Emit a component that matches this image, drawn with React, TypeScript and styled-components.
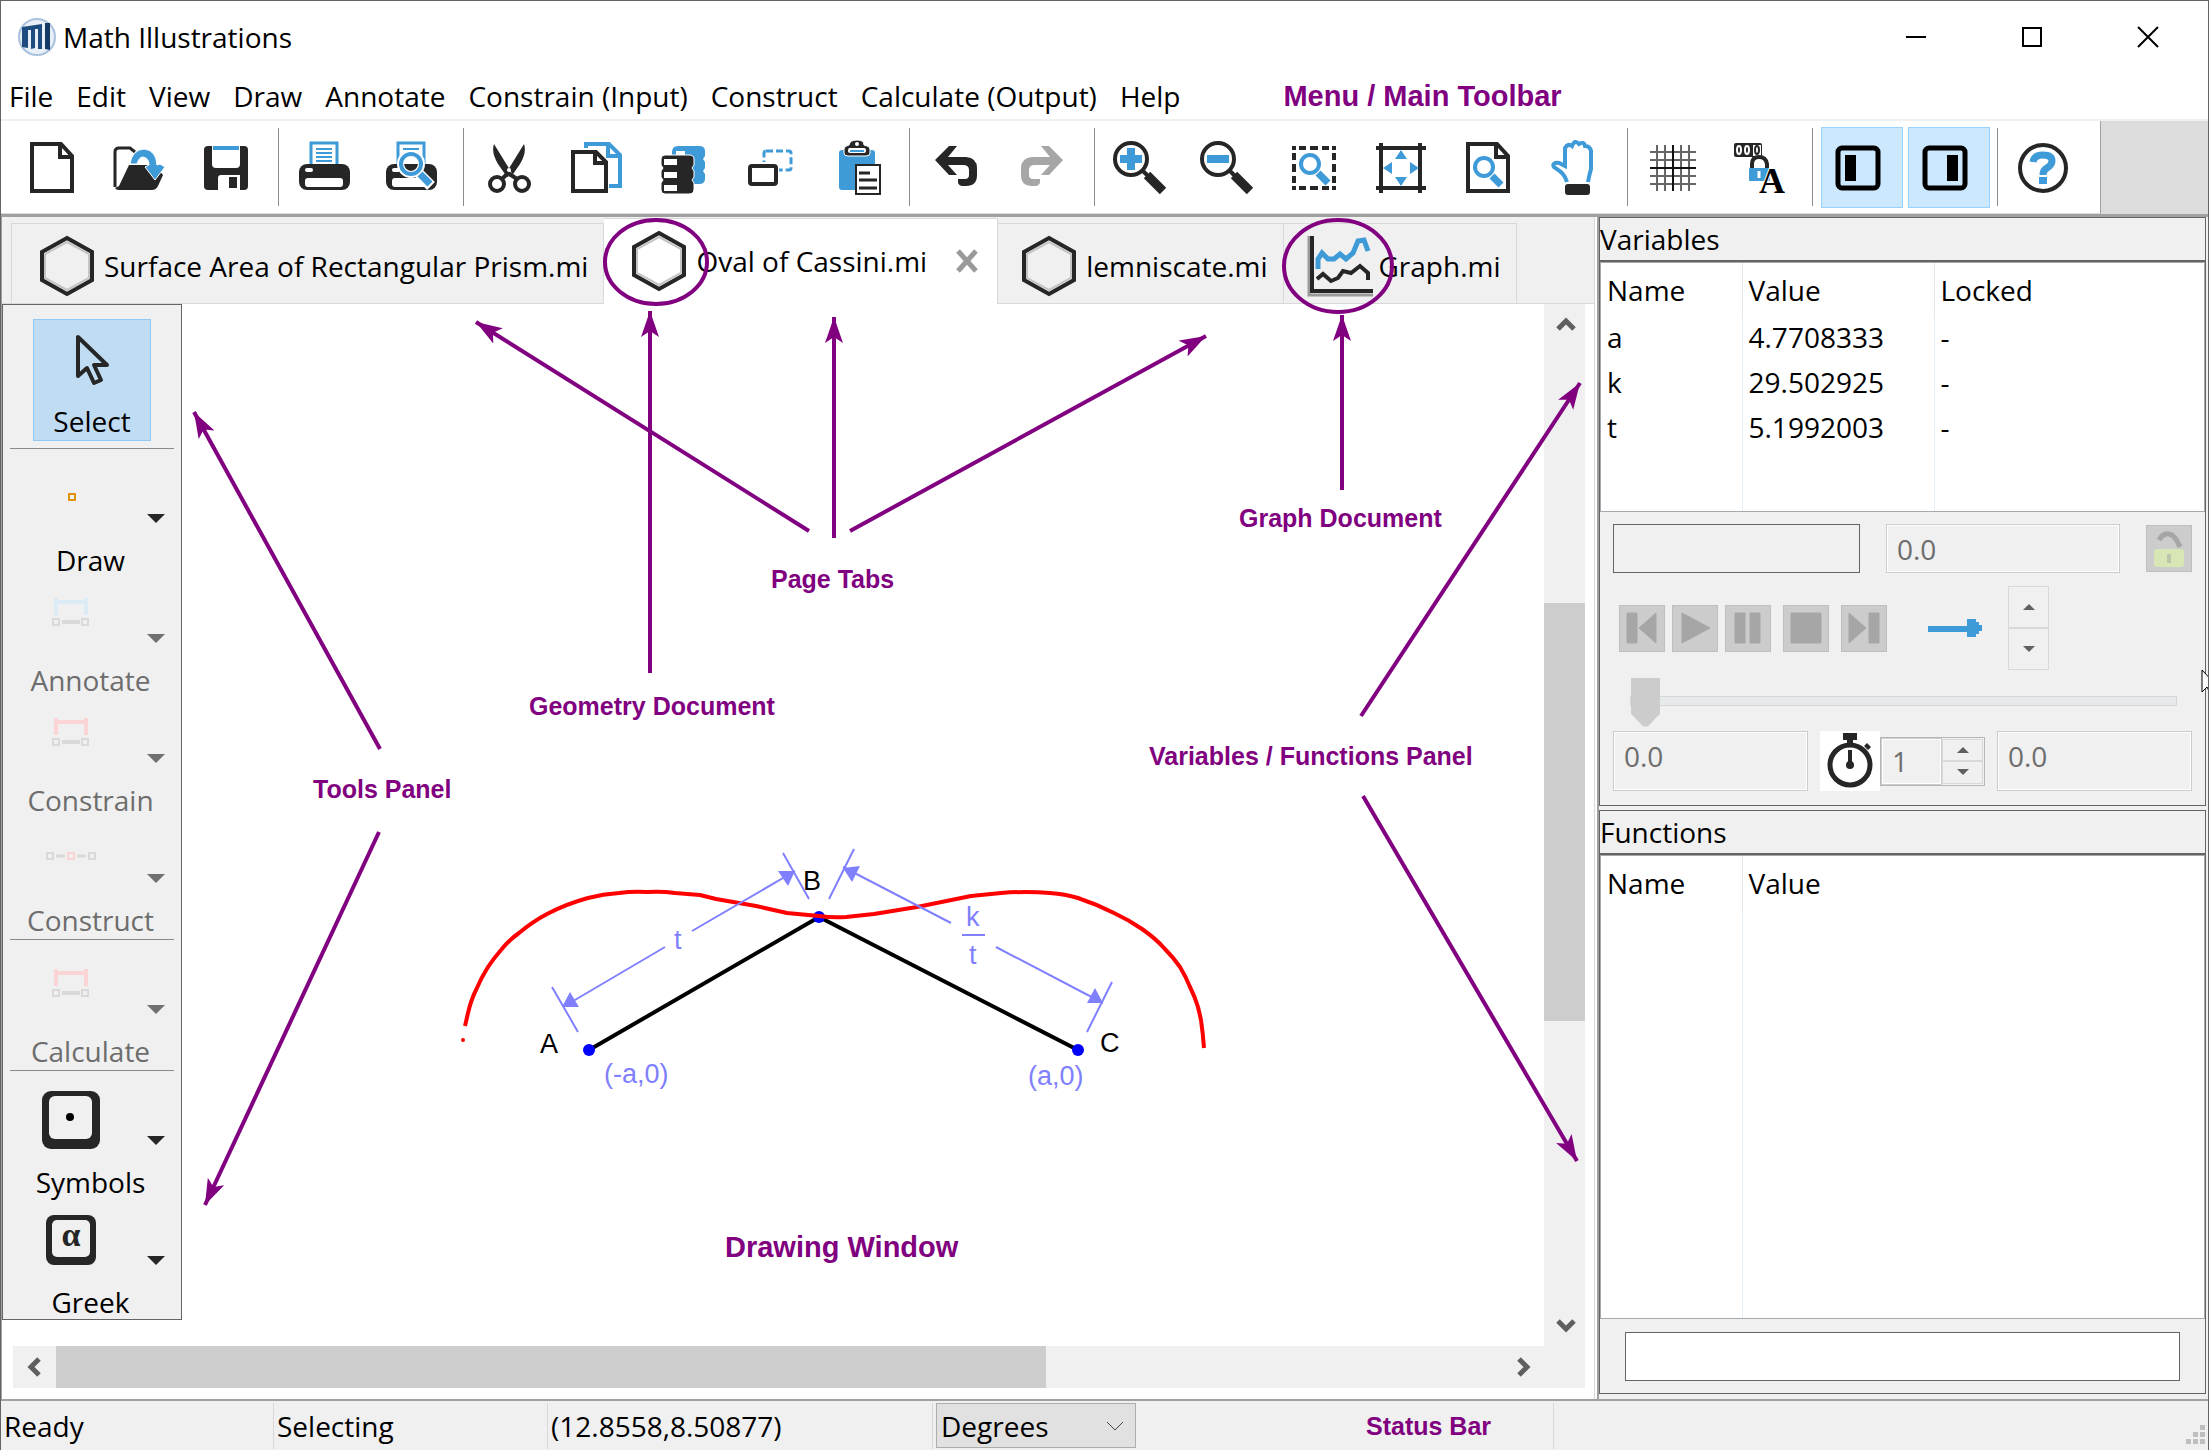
import React from "react";
import styled, { createGlobalStyle, css } from "styled-components";

const INK = "#262626";
const BLUE = "#3f9bd8";
const PURPLE = "#800080";
const FACE = "#f0f0f0";
const EDGE = "#646464";
const RULE = "#d9d9d9";

const GlobalStyle = createGlobalStyle`
  *, *::before, *::after { box-sizing: border-box; }
  body { margin: 0; background: ${FACE}; }
  body, button, input, select {
    font-family: "Open Sans", "Noto Sans", sans-serif;
    font-size: 28px;
    line-height: 38px;
    color: #000;
  }
  button { padding: 0; border: 0; background: none; }
  svg { display: block; flex: none; overflow: visible; }
`;

const Window = styled.div`
  position: relative;
  display: flex;
  flex-direction: column;
  min-height: 100vh;
  border: 1px solid ${EDGE};
  background: #fff;
  overflow: hidden;
`;

/* ---------- title bar and menu ---------- */

const TitleBar = styled.header`
  display: flex;
  align-items: center;
  height: 72px;
  padding: 0 2px 0 16px;
`;
const Title = styled.h1`
  flex: 1;
  margin: 0 0 0 6px;
  font-size: inherit;
  font-weight: 400;
`;
const CaptionButton = styled.button`
  display: flex;
  align-items: center;
  justify-content: center;
  width: 116px;
  height: 70px;
`;
const MenuBar = styled.nav`
  display: flex;
  align-items: center;
  height: 48px;
  padding: 0 8px;
  gap: 23px;
  border-bottom: 2px solid ${FACE};
`;
const Callout = styled.span<{ $large?: boolean; $before: number }>`
  margin-left: ${(p) => p.$before}px;
  font: 700 ${(p) => (p.$large ? 29 : 25)}px/32px "Liberation Sans", Arial, sans-serif;
  color: ${PURPLE};
  white-space: nowrap;
`;

/* ---------- toolbar ---------- */

const ToolStrip = styled.div`
  display: flex;
  height: 96px;
  background: #dcdcdc;
  border-bottom: 3px solid #a0a0a0;
`;
const ToolBar = styled.div`
  display: flex;
  align-items: center;
  gap: 5px;
  padding: 0 12px 0 14px;
  background: #fff;
  border-right: 1px solid #a0a0a0;
  border-bottom: 1px solid ${RULE};
`;
const ToolButton = styled.button<{ $on?: boolean }>`
  display: flex;
  align-items: center;
  justify-content: center;
  width: 82px;
  height: 81px;
  padding: 2px 8px 0 0;
  border: 1px solid ${(p) => (p.$on ? "#99d1ff" : "transparent")};
  background: ${(p) => (p.$on ? "#cce8ff" : "transparent")};
`;
const ToolGap = styled.span`
  width: 1px;
  height: 78px;
  margin: 0 3px 0 2px;
  background: #8d8d8d;
`;

/* ---------- document area ---------- */

const Body = styled.main`
  display: flex;
  flex: 1;
  min-height: 0;
`;
const DocPane = styled.section`
  position: relative;
  display: flex;
  flex: 1;
  flex-direction: column;
  min-width: 0;
  border-left: 1px solid #a0a0a0;
  border-right: 1px solid ${RULE};
`;
const TabRow = styled.div`
  display: flex;
  align-items: flex-end;
  height: 87px;
  padding-left: 9px;
  background: ${FACE};
  border-bottom: 1px solid ${RULE};
`;
const Tab = styled.button<{ $active?: boolean; $left?: number; $gap?: number }>`
  display: flex;
  align-items: center;
  gap: ${(p) => p.$gap ?? 10}px;
  height: 80px;
  padding: 4px 15px 0 ${(p) => p.$left ?? 28}px;
  border: 1px solid ${RULE};
  border-width: 1px 1px 0 0;
  white-space: nowrap;
  &:first-child { border-left-width: 1px; }
  ${(p) =>
    p.$active &&
    css`
      height: 86px;
      margin-bottom: -1px;
      padding: 0 18px 2px 28px;
      background: #fff;
    `}
`;
const TabClose = styled.span`
  display: flex;
  margin-left: 18px;
`;
const Workspace = styled.div`
  display: flex;
  flex: 1;
  margin-right: 9px;
`;
const Canvas = styled.div`
  flex: 1;
  min-width: 0;
  overflow: hidden;
`;
const Annotations = styled.svg`
  position: absolute;
  left: 0;
  top: 0;
  pointer-events: none;
`;

const Palette = styled.aside`
  align-self: flex-start;
  width: 180px;
  height: 1016px;
  padding-top: 14px;
  border: 1px solid ${EDGE};
  background: ${FACE};
  overflow: hidden;
`;
const SelectTool = styled.button`
  display: flex;
  flex-direction: column;
  align-items: center;
  justify-content: space-between;
  width: 118px;
  height: 122px;
  margin: 0 0 7px 30px;
  padding-top: 12px;
  border: 1px solid #90c8f6;
  background: #c0dcf3;
`;
const PaletteRule = styled.hr`
  height: 1px;
  margin: 0 7px 10px;
  border: 0;
  background: #8a8a8a;
`;
const PaletteItem = styled.button`
  display: flex;
  flex-direction: column;
  justify-content: space-between;
  width: 100%;
  height: 120px;
  color: #000;
  &:disabled { color: #6d6d6d; }
`;
const PaletteIcons = styled.span`
  display: flex;
  gap: 45px;
  padding: 9px 0 0 39px;
`;
const PaletteLabel = styled.span`
  align-self: stretch;
  padding-right: 3px;
  text-align: center;
`;

/* ---------- scroll bars ---------- */

const VBar = styled.div`
  display: flex;
  flex-direction: column;
  width: 41px;
  background: ${FACE};
`;
const HBar = styled.div`
  display: flex;
  height: 42px;
  margin: 0 9px 11px 11px;
  padding-right: 41px;
  background: ${FACE};
`;
const Arrow = styled.button`
  display: flex;
  align-items: center;
  justify-content: center;
  width: 43px;
  height: 42px;
`;
const VTrack = styled.div`
  display: grid;
  grid-template-rows: 257fr 418fr 283fr;
  flex: 1;
`;
const HTrack = styled.div`
  display: grid;
  grid-template-columns: 989fr 455fr;
  flex: 1;
`;
const Thumb = styled.span<{ $row?: number }>`
  grid-row: ${(p) => p.$row ?? 1};
  background: #cdcdcd;
`;

/* ---------- side panels ---------- */

const Side = styled.aside`
  display: flex;
  flex-direction: column;
  width: 611px;
  padding: 0 2px 5px 0;
  gap: 4px;
  margin-left: 2px;
  border-left: 2px solid #a0a0a0;
  background: ${FACE};
`;
const Panel = styled.section<{ $grow?: boolean }>`
  display: flex;
  flex-direction: column;
  flex: ${(p) => (p.$grow ? "1" : "none")};
  border: 1px solid ${EDGE};
`;
const PanelTitle = styled.h2`
  height: 44px;
  margin: 0;
  padding-top: 2px;
  border-bottom: 2px solid ${EDGE};
  font-size: inherit;
  font-weight: 400;
`;
const ListBox = styled.div<{ $rows?: boolean }>`
  display: flex;
  flex: ${(p) => (p.$rows ? "none" : "1")};
  height: ${(p) => (p.$rows ? "250px" : "auto")};
  min-height: 200px;
  border: 1px solid #a5a8ad;
  background: #fff;
`;
const Grid = styled.table`
  width: 100%;
  border-collapse: collapse;
  table-layout: fixed;
  th, td {
    height: 45px;
    padding: 0 0 0 6px;
    border-left: 1px solid #e8f0f7;
    text-align: left;
    vertical-align: top;
    font-weight: 400;
  }
  th { height: 55px; padding-top: 8px; border-color: #e5e5e5; }
  th:first-child, td:first-child { border-left: 0; }
  tr:last-child td { height: auto; }
`;
const Col = styled.col<{ $w?: number }>`
  width: ${(p) => (p.$w ? `${p.$w}px` : "auto")};
`;
const Controls = styled.div`
  display: flex;
  flex-direction: column;
  padding: 12px 13px 14px;
`;
const Row = styled.div<{ $h: number }>`
  display: flex;
  align-items: center;
  justify-content: space-between;
  height: ${(p) => p.$h}px;
`;
const Field = styled.input<{ $w?: number; $h?: number; $dark?: boolean; $lift?: boolean }>`
  width: ${(p) => (p.$w ? `${p.$w}px` : "100%")};
  height: ${(p) => p.$h ?? 49}px;
  padding: 0 10px ${(p) => (p.$lift ? 10 : 0)}px;
  border: 1px solid ${(p) => (p.$dark ? EDGE : "#cccccc")};
  border-radius: 0;
  outline: 0;
  background: ${(p) => (p.disabled ? FACE : "#fff")};
  box-shadow: ${(p) => (p.$dark ? "none" : "inset 0 0 0 1px #fff")};
  color: #6d6d6d;
`;
const SquareButton = styled.button`
  display: flex;
  align-items: center;
  justify-content: center;
  width: 46px;
  height: 47px;
  border: 1px solid #bfbfbf;
  background: #cccccc;
`;
const Transport = styled.div`
  display: flex;
  align-items: center;
  height: 84px;
  margin-top: 13px;
  padding-left: 6px;
`;
const Group = styled.div<{ $gap: number; $after: number }>`
  display: flex;
  align-items: center;
  gap: ${(p) => p.$gap}px;
  margin-right: ${(p) => p.$after}px;
`;
const Spin = styled.div<{ $w: number; $h: number }>`
  display: flex;
  flex-direction: column;
  flex: none;
  width: ${(p) => p.$w}px;
  height: ${(p) => p.$h}px;
`;
const SpinButton = styled.button`
  display: flex;
  flex: 1;
  align-items: center;
  justify-content: center;
  border: 1px solid ${RULE};
`;
const NumberBox = styled.div`
  display: flex;
  align-items: center;
  width: 105px;
  height: 49px;
  padding-right: 1px;
  border: 1px solid #b4b7bb;
`;
const Timer = styled.span`
  display: flex;
  align-items: center;
  justify-content: center;
  width: 60px;
  height: 60px;
  background: #fff;
`;
const Slider = styled.input`
  appearance: none;
  width: 547px;
  height: 49px;
  margin: 6px 17px;
  background: none;
  &::-webkit-slider-runnable-track {
    height: 10px;
    border: 1px solid #d3d7d7;
    background: #e6eaea;
  }
  &::-webkit-slider-thumb {
    appearance: none;
    width: 29px;
    height: 49px;
    margin-top: -19px;
    background: #cccccc;
    clip-path: polygon(0 0, 100% 0, 100% 74%, 58% 100%, 42% 100%, 0 74%);
  }
`;
const Entry = styled.div`
  padding: 13px 25px 12px;
`;

/* ---------- status bar ---------- */

const StatusBar = styled.footer`
  display: flex;
  align-items: center;
  height: 51px;
  border-top: 2px solid #a0a0a0;
  background: ${FACE};
`;
const StatusCell = styled.div<{ $w?: number }>`
  display: flex;
  align-items: center;
  flex: ${(p) => (p.$w ? "none" : "1")};
  width: ${(p) => (p.$w ? `${p.$w}px` : "auto")};
  height: 46px;
  padding-left: 3px;
  border-right: ${(p) => (p.$w ? 1 : 0)}px solid ${RULE};
`;
const SelectWrap = styled.label`
  display: grid;
  align-items: center;
  width: 200px;
  height: 45px;
  border: 1px solid #adadad;
  background: #e1e1e1;
  svg { grid-area: 1 / 1; justify-self: end; margin-right: 10px; pointer-events: none; }
`;
const UnitSelect = styled.select`
  grid-area: 1 / 1;
  width: 100%;
  height: 43px;
  padding: 0 0 0 4px;
  border: 0;
  appearance: none;
  background: transparent;
`;
const Pointer = styled.svg`
  position: absolute;
  right: -10px;
  top: 668px;
`;

/* ---------- icons ---------- */

const Icon = ({ children, w = 56, h = 56 }: { children: React.ReactNode; w?: number; h?: number }) => (
  <svg width={w} height={h} viewBox={`0 0 ${w} ${h}`} fill="none" aria-hidden="true">
    {children}
  </svg>
);

const Printer = () => (
  <>
    <path d="M15 25V3h26v22" stroke={BLUE} strokeWidth="3" fill="#fff" />
    <path d="M20 9h16M20 13h16M20 17h16M20 21h16" stroke={BLUE} strokeWidth="2" />
    <rect x="3" y="24" width="51" height="26" rx="8" fill={INK} />
    <rect x="9" y="28" width="8" height="4" rx="2" fill="#fff" />
    <rect x="9" y="38" width="38" height="9" rx="3" fill="#fff" />
  </>
);

const Lens = ({ x, y, r, to }: { x: number; y: number; r: number; to: number }) => (
  <>
    <circle cx={x} cy={y} r={r} stroke={BLUE} strokeWidth="4" fill="#fff" />
    <path d={`M${x + r - 1} ${y + r}L${x + to} ${y + to + 1}`} stroke={BLUE} strokeWidth="7" />
  </>
);

const Magnifier = () => (
  <>
    <circle cx="19" cy="19" r="16" stroke={INK} strokeWidth="4" />
    <path d="M31 31L36 36" stroke={INK} strokeWidth="4" />
    <path d="M35 35L51 51" stroke={INK} strokeWidth="9" />
  </>
);

const DASH = "4 3 7 4 8 4 7 3 4 9";

const icons: Record<string, React.ReactNode> = {
  new: <path d="M8 4H37L48 16V51H8ZM36 4V17H48" stroke={INK} strokeWidth="4" />,
  open: (
    <>
      <path d="M4 47V12q0-4 4-4h11l5 4" stroke={INK} strokeWidth="3" />
      <path d="M4 48L8 46L18 25H44L52 35L47 46q-2 4-6 4H8q-4 0-4-3Z" fill={INK} />
      <path d="M19 24Q21 10 33 9Q45 10 46 25L49 24L54 27L44 40L34 27L38 25Q38 18 32 17Q28 17 26 24Z" fill={BLUE} stroke="#fff" strokeWidth="1" />
    </>
  ),
  save: (
    <>
      <path d="M10 6H46q4 0 4 4V46q0 4-4 4H10q-4 0-4-4V10q0-4 4-4Z" fill={INK} />
      <path d="M14 6H42V24q0 4-4 4H18q-4 0-4-4Z" fill="#fff" />
      <path d="M15 6H41V10H15Z" fill={BLUE} />
      <path d="M23 35H42V50H20V38q0-3 3-3Z" fill="#fff" />
      <path d="M31 37H39V48H31Z" fill={INK} />
    </>
  ),
  print: <Printer />,
  preview: (
    <>
      <Printer />
      <circle cx="28" cy="24" r="14" fill="#fff" />
      <path d="M36 34L48 46" stroke="#fff" strokeWidth="11" />
      <Lens x={28} y={24} r={10} to={19} />
      <path d="M21 24H35Q34 30 28 31Q22 30 21 24Z" fill={INK} />
    </>
  ),
  cut: (
    <>
      <path d="M13 4L32 35L26 37L17 24Q10 12 13 4ZM43 4L24 35L30 37L39 24Q46 12 43 4Z" fill={INK} />
      <circle cx="16" cy="44" r="7" stroke={INK} strokeWidth="4" />
      <circle cx="41" cy="44" r="7" stroke={INK} strokeWidth="4" />
      <path d="M21 39L27 33L36 39" stroke={INK} strokeWidth="4" />
      <circle cx="28" cy="30" r="2" fill="#fff" />
    </>
  ),
  copy: (
    <>
      <path d="M18 8V4H41L52 15V46H41M40 4V16H52" stroke={BLUE} strokeWidth="4" />
      <path d="M5 12H28L38 22V51H5Z" fill="#fff" stroke={INK} strokeWidth="4" />
      <path d="M27 12V23H38" stroke={INK} strokeWidth="4" />
    </>
  ),
  stack: (
    <>
      <path d="M17 12q0-6 6-6H44q6 0 6 5v5l-2 3l2 3v6l-2 3l2 3v5q0 5-6 5H30V11H21v4H17Z" fill={BLUE} />
      <path d="M10 15H34q5 0 5 4v6l-2 3l2 3v6l-2 3l2 3v6q0 5-5 5H10q-4 0-4-4v-7l2-3l-2-3v-6l2-3l-2-3v-6q0-4 4-4Z" fill={INK} stroke="#fff" strokeWidth="1" />
      <path d="M9 19h13v6H9ZM9 32h13v6H9ZM9 45h13v6H9Z" fill="#fff" />
    </>
  ),
  duplicate: (
    <>
      <rect x="22" y="11" width="27" height="19" rx="2" stroke={BLUE} strokeWidth="3" strokeDasharray="7 3" />
      <path d="M4 22H37V48H4Z" fill="#fff" />
      <rect x="8" y="26" width="26" height="18" rx="2" fill="#fff" stroke={INK} strokeWidth="4" />
    </>
  ),
  paste: (
    <>
      <rect x="10" y="10" width="36" height="40" rx="3" fill={BLUE} />
      <path d="M15 13V9q0-3 5-4q1-5 8-5t7 5q6 1 6 4v4q0 3-4 3H19q-4 0-4-3Z" fill={INK} stroke="#fff" strokeWidth="1" />
      <rect x="19" y="8" width="18" height="5" rx="2" fill="#fff" />
      <path d="M21 11H35" stroke={BLUE} strokeWidth="2" />
      <circle cx="28" cy="4" r="2" fill="#fff" />
      <rect x="27" y="25" width="24" height="29" fill="#fff" stroke={INK} strokeWidth="2" />
      <path d="M30 33H41M30 40H48M30 48H48" stroke={INK} strokeWidth="3" />
    </>
  ),
  undo: <path d="M8 20L22 6H30L21 17H39Q50 18 50 28V35Q50 46 39 46H35Q31 45 31 42V39H38Q42 39 42 35V30Q42 25 36 25H21L30 35H22Z" fill={INK} />,
  redo: <path d="M49 20L35 6H27L36 17H18Q7 18 7 28V35Q7 46 18 46H22Q26 45 26 42V39H19Q15 39 15 35V30Q15 25 21 25H36L27 35H35Z" fill="#a6a6a6" />,
  zoomIn: (
    <>
      <Magnifier />
      <path d="M19 8V30M8 19H30" stroke={BLUE} strokeWidth="8" />
    </>
  ),
  zoomOut: (
    <>
      <Magnifier />
      <path d="M8 19H30" stroke={BLUE} strokeWidth="8" />
    </>
  ),
  zoomArea: (
    <>
      <path d="M6 8H50M6 48H50M8 6V50M48 6V50" stroke={INK} strokeWidth="4" strokeDasharray={DASH} />
      <Lens x={24} y={24} r={9} to={18} />
    </>
  ),
  fit: (
    <>
      <path d="M3 8H53M3 48H53M8 3V53M47 3V53" stroke={INK} strokeWidth="4" />
      <path d="M28 10L34 19H22ZM28 46L34 37H22ZM10 28L19 22V34ZM46 28L37 22V34Z" fill={BLUE} />
    </>
  ),
  zoomPage: (
    <>
      <path d="M8 4H37L48 16V51H8ZM36 4V17H48" stroke={INK} strokeWidth="4" />
      <Lens x={24} y={27} r={9} to={17} />
    </>
  ),
  pan: (
    <>
      <path d="M20 42C18 34 13 31 7 27C5 24 8 22 12 23L18 26V8Q21 3 25 6Q28 -1 32 4Q37 1 38 6Q43 6 44 11V29Q42 36 41 42" stroke={BLUE} strokeWidth="4" />
      <rect x="18" y="44" width="25" height="11" rx="3" fill={INK} />
    </>
  ),
  grid: (
    <>
      <path d="M12 5V51M20 5V51M36 5V51M44 5V51M5 12H51M5 20H51M5 36H51M5 44H51" stroke="#666" strokeWidth="2" />
      <path d="M28 5V51M5 28H51" stroke="#111" strokeWidth="2" />
    </>
  ),
  lock: (
    <>
      <rect x="2" y="3" width="28" height="14" rx="2" fill={INK} />
      <ellipse cx="7" cy="10" rx="2" ry="4" stroke="#fff" strokeWidth="2" />
      <ellipse cx="15" cy="10" rx="2" ry="4" stroke="#fff" strokeWidth="2" />
      <rect x="21" y="5" width="8" height="11" fill="#fff" />
      <ellipse cx="25" cy="10" rx="2" ry="4" stroke={INK} strokeWidth="2" />
      <path d="M20 29V24Q20 17 27 17T35 24V29" stroke={INK} strokeWidth="4" />
      <rect x="17" y="28" width="21" height="13" rx="1" fill={BLUE} />
      <path d="M27 31V38" stroke="#fff" strokeWidth="3" />
      <text x="27" y="53" fontFamily="Liberation Serif, serif" fontWeight="700" fontSize="36" fill="#000" stroke="#fff" strokeWidth="2" paintOrder="stroke">A</text>
    </>
  ),
  leftPanel: (
    <>
      <rect x="8" y="8" width="40" height="40" rx="4" stroke="#000" strokeWidth="5" />
      <path d="M15 15H26V41H15Z" fill="#000" />
    </>
  ),
  rightPanel: (
    <>
      <rect x="8" y="8" width="40" height="40" rx="4" stroke="#000" strokeWidth="5" />
      <path d="M30 15H41V41H30Z" fill="#000" />
    </>
  ),
  help: (
    <>
      <circle cx="28" cy="28" r="23" stroke={INK} strokeWidth="4" />
      <path d="M18 22Q19 15 28 15T37 21Q37 25 32 28Q28 30 28 35" stroke={BLUE} strokeWidth="7" />
      <path d="M24 37H32V44H24Z" fill={BLUE} />
    </>
  ),
};

const toolGroups: [string, string, boolean?][][] = [
  [["new", "New"], ["open", "Open"], ["save", "Save"]],
  [["print", "Print"], ["preview", "Print preview"]],
  [["cut", "Cut"], ["copy", "Copy"], ["stack", "Copy as"], ["duplicate", "Duplicate"], ["paste", "Paste"]],
  [["undo", "Undo"], ["redo", "Redo"]],
  [["zoomIn", "Zoom in"], ["zoomOut", "Zoom out"], ["zoomArea", "Zoom to area"], ["fit", "Fit"], ["zoomPage", "Zoom page"], ["pan", "Pan"]],
  [["grid", "Grid"], ["lock", "Lock values"]],
  [["leftPanel", "Tools panel", true], ["rightPanel", "Variables panel", true]],
  [["help", "Help"]],
];

const Hexagon = () => (
  <Icon w={54} h={62}>
    <path d="M27 3L52 17V45L27 59L2 45V17Z" stroke={INK} strokeWidth="4" />
    <path d="M27 7L49 19V43L27 55L5 43V19Z" stroke="#c4c4c4" strokeWidth="2" />
  </Icon>
);
const GraphIcon = () => (
  <Icon w={66} h={62}>
    <path d="M1 1V60H65" stroke="#9a9a9a" strokeWidth="3" />
    <path d="M4 1V56H65" stroke={INK} strokeWidth="4" />
    <path d="M10 34V24L14 18L20 24L26 24L32 19L38 24L45 18L50 6L56 5L60 16" stroke={BLUE} strokeWidth="5" />
    <path d="M9 44L15 39L23 46L30 43L35 36L43 38L52 31L60 38V45" stroke={INK} strokeWidth="4" />
  </Icon>
);

/* ---------- tools panel content ---------- */

const Measure = ({ tint }: { tint: string }) => (
  <>
    <path d="M14 10V27M44 10V27M14 14H44" stroke={tint} strokeWidth="4" />
    <path d="M20 34H38" stroke="#d9d9d9" strokeWidth="4" />
    <path d="M11 31h6v6h-6ZM40 31h6v6h-6Z" stroke="#d9d9d9" strokeWidth="2" />
  </>
);

type PaletteEntry = { label: string; art: React.ReactNode; off?: boolean; rule?: boolean };
const palette: PaletteEntry[] = [
  { label: "Draw", art: <path d="M27 26h6v6h-6Z" stroke="#e0920f" strokeWidth="2" /> },
  { label: "Annotate", art: <Measure tint="#dcecf7" />, off: true },
  { label: "Constrain", art: <Measure tint="#fbd5d5" />, off: true },
  {
    label: "Construct",
    off: true,
    rule: true,
    art: (
      <>
        <path d="M5 25h6v6h-6ZM47 25h6v6h-6Z" stroke="#d9d9d9" strokeWidth="2" />
        <path d="M14 28h9M35 28h9" stroke="#d9d9d9" strokeWidth="3" />
        <path d="M26 25h6v6h-6Z" stroke="#fbd5d5" strokeWidth="2" />
      </>
    ),
  },
  { label: "Calculate", art: <Measure tint="#fbd5d5" />, off: true, rule: true },
  {
    label: "Symbols",
    art: (
      <>
        <rect x="0" y="1" width="58" height="58" rx="9" fill={INK} />
        <rect x="7" y="6" width="43" height="43" rx="6" fill={FACE} />
        <circle cx="28" cy="27" r="4" fill="#000" />
      </>
    ),
  },
  {
    label: "Greek",
    art: (
      <>
        <rect x="4" y="5" width="50" height="50" rx="8" fill={INK} />
        <rect x="10" y="10" width="38" height="37" rx="5" fill={FACE} />
        <text x="29" y="36" textAnchor="middle" fontFamily="Liberation Serif, serif" fontWeight="700" fontSize="34" fill={INK}>α</text>
      </>
    ),
  },
];

/* ---------- drawing ---------- */

const Drawing = () => (
  <svg width="1361" height="1042" viewBox="182 304 1361 1042" fill="none" role="img" aria-label="Oval of Cassini">
    <path d="M589 1050L819 917L1078 1050" stroke="#000" strokeWidth="4" />
    <g fill="#0000ff">
      <circle cx="589" cy="1050" r="6" />
      <circle cx="819" cy="917" r="6" />
      <circle cx="1078" cy="1050" r="6" />
    </g>
    <path
      d="M465 1026L468 1013Q471 1000 476 990Q481 978 488 967Q494 958 501 950Q509 940 519 933Q532 922 547 914Q566 904 588 898Q603 894 619 893Q633 891 647 892Q662 891 675 893L700 895L716 899L756 906L787 913L819 916Q833 918 846 917L874 914L917 907L971 896L1001 893Q1026 891 1050 893Q1065 894 1078 898Q1096 904 1114 913Q1129 920 1142 929Q1155 938 1164 948Q1173 957 1180 967Q1186 977 1190 987Q1195 997 1198 1007L1201 1020Q1203 1034 1204 1048"
      stroke="#ff0000" strokeWidth="4" strokeLinejoin="round"
    />
    <circle cx="463" cy="1040" r="2" fill="#ff0000" />
    <path
      d="M552 987L578 1032M783 853L809 899M854 849L829 899M1112 982L1087 1032M563 1007L665 947M692 931L795 871M843 867L951 923M996 947L1103 1003M962 935H985"
      stroke="#8080ff" strokeWidth="2"
    />
    <g fill="#8080ff">
      <path d="M562 1007H579L570 992Z" />
      <path d="M795 871H778L788 886Z" />
      <path d="M843 868L860 866L852 882Z" />
      <path d="M1103 1003H1087L1095 988Z" />
    </g>
    <g fontFamily="Liberation Sans, Arial, sans-serif" fontSize="27" fill="#8080ff">
      <text x="674" y="949">t</text>
      <text x="966" y="926">k</text>
      <text x="969" y="964">t</text>
      <text x="604" y="1083">(-a,0)</text>
      <text x="1028" y="1085">(a,0)</text>
      <g fill="#000">
        <text x="540" y="1053">A</text>
        <text x="803" y="890">B</text>
        <text x="1100" y="1052">C</text>
      </g>
    </g>
  </svg>
);

const pointers = [
  "M809 531L476 322", "M650 673V311", "M834 538V317", "M850 531L1206 336", "M1342 490V315",
  "M380 749L194 412", "M379 832L205 1205", "M1361 716L1580 383", "M1363 796L1577 1161",
];
const notes: [string, number, number][] = [
  ["Page Tabs", 771, 588], ["Geometry Document", 529, 715], ["Graph Document", 1239, 527],
  ["Tools Panel", 313, 798], ["Variables / Functions Panel", 1149, 765],
];

const Notes = () => (
  <Annotations width="1592" height="1182" viewBox="2 217 1592 1182" fill="none">
    <defs>
      <marker id="tip" markerUnits="userSpaceOnUse" markerWidth="26" markerHeight="20" viewBox="-26 -10 26 20" refX="0" refY="0" orient="auto">
        <path d="M0 0L-26 9L-20 0L-26 -9Z" fill={PURPLE} />
      </marker>
    </defs>
    <g stroke={PURPLE} strokeWidth="4">
      <ellipse cx="656" cy="262" rx="51" ry="42" />
      <ellipse cx="1338" cy="266" rx="54" ry="46" />
      {pointers.map((d) => (
        <path key={d} d={d} markerEnd="url(#tip)" />
      ))}
    </g>
    <g fontFamily="Liberation Sans, Arial, sans-serif" fontWeight="700" fontSize="25" fill={PURPLE}>
      {notes.map(([t, x, y]) => (
        <text key={t} x={x} y={y}>{t}</text>
      ))}
      <text x="725" y="1257" fontSize="29">Drawing Window</text>
    </g>
  </Annotations>
);

/* ---------- small glyphs ---------- */

const Chevron = ({ turn }: { turn: number }) => (
  <Icon w={20} h={20}>
    <path d="M2 14L10 6L18 14" stroke="#5f5f5f" strokeWidth="5" transform={`rotate(${turn} 10 10)`} />
  </Icon>
);
const Caret = ({ up }: { up?: boolean }) => (
  <Icon w={12} h={6}>
    <path d={up ? "M0 6L6 0L12 6Z" : "M0 0L6 6L12 0Z"} fill="#606060" />
  </Icon>
);

const transport: [string, string][] = [
  ["Go to start", "M8 7h10v30H8ZM37 7v30L20 22Z"],
  ["Play", "M10 7L38 22L10 37Z"],
  ["Pause", "M10 7h10v30H10ZM25 7h10v30H25Z"],
  ["Stop", "M8 7h30v30H8Z"],
  ["Go to end", "M8 7L25 22L8 37ZM28 7h10v30H28Z"],
];
const TransportButton = ({ i }: { i: number }) => (
  <SquareButton disabled aria-label={transport[i][0]}>
    <Icon w={46} h={44}>
      <path d={transport[i][1]} fill="#a6a6a6" stroke="#a6a6a6" strokeWidth="1" strokeLinejoin="round" />
    </Icon>
  </SquareButton>
);

const variables = [["a", "4.7708333"], ["k", "29.502925"], ["t", "5.1992003"]];
const menus = ["File", "Edit", "View", "Draw", "Annotate", "Constrain (Input)", "Construct", "Calculate (Output)", "Help"];

export default function App() {
  return (
    <Window>
      <GlobalStyle />
      <TitleBar>
        <Icon w={40} h={40}>
          <circle cx="20" cy="20" r="18" fill="#e9eff6" stroke="#a9c1dc" strokeWidth="2" />
          <path d="M5 10L25 7V32H21V12H18V31L14 32V13H11V31L5 30Z" fill="#1d4c80" />
          <path d="M28 6H33V33L28 32Z" fill="#153a66" />
        </Icon>
        <Title>Math Illustrations</Title>
        <CaptionButton aria-label="Minimize">
          <Icon w={20} h={20}><path d="M0 10H20" stroke="#000" strokeWidth="2" /></Icon>
        </CaptionButton>
        <CaptionButton aria-label="Maximize">
          <Icon w={20} h={20}><path d="M1 1H19V19H1Z" stroke="#000" strokeWidth="2" /></Icon>
        </CaptionButton>
        <CaptionButton aria-label="Close">
          <Icon w={20} h={20}><path d="M0 0L20 20M20 0L0 20" stroke="#000" strokeWidth="2" /></Icon>
        </CaptionButton>
      </TitleBar>
      <MenuBar>
        {menus.map((m) => <button key={m}>{m}</button>)}
        <Callout $large $before={80}>Menu / Main Toolbar</Callout>
      </MenuBar>
      <ToolStrip>
        <ToolBar role="toolbar">
          {toolGroups.map((group, g) => (
            <React.Fragment key={g}>
              {g > 0 && <ToolGap />}
              {group.map(([id, label, on]) => (
                <ToolButton key={id} aria-label={label} $on={on}>
                  <Icon>{icons[id]}</Icon>
                </ToolButton>
              ))}
            </React.Fragment>
          ))}
        </ToolBar>
      </ToolStrip>

      <Body>
        <DocPane>
          <TabRow>
            <Tab><Hexagon />Surface Area of Rectangular Prism.mi</Tab>
            <Tab $active>
              <Hexagon />Oval of Cassini.mi
              <TabClose>
                <Icon w={24} h={20}><path d="M3 0L21 20M21 0L3 20" stroke="#999" strokeWidth="5" /></Icon>
              </TabClose>
            </Tab>
            <Tab $left={24}><Hexagon />lemniscate.mi</Tab>
            <Tab $left={24} $gap={5}><GraphIcon />Graph.mi</Tab>
          </TabRow>
          <Workspace>
            <Palette>
              <SelectTool>
                <Icon w={40} h={56}>
                  <path d="M6 5V44L15 36L22 51L29 48L22 33H35Z" stroke={INK} strokeWidth="4" strokeLinejoin="round" />
                </Icon>
                Select
              </SelectTool>
              <PaletteRule />
              {palette.map((p) => (
                <React.Fragment key={p.label}>
                  <PaletteItem disabled={p.off}>
                    <PaletteIcons>
                      <Icon w={60} h={60}>{p.art}</Icon>
                      <Icon w={18} h={60}>
                        <path d="M0 46H18L9 55Z" fill={p.off ? "#707070" : INK} />
                      </Icon>
                    </PaletteIcons>
                    <PaletteLabel>{p.label}</PaletteLabel>
                  </PaletteItem>
                  {p.rule && <PaletteRule />}
                </React.Fragment>
              ))}
            </Palette>
            <Canvas><Drawing /></Canvas>
            <VBar>
              <Arrow aria-label="Scroll up"><Chevron turn={0} /></Arrow>
              <VTrack><Thumb $row={2} /></VTrack>
              <Arrow aria-label="Scroll down"><Chevron turn={180} /></Arrow>
            </VBar>
          </Workspace>
          <HBar>
            <Arrow aria-label="Scroll left"><Chevron turn={270} /></Arrow>
            <HTrack><Thumb /></HTrack>
            <Arrow aria-label="Scroll right"><Chevron turn={90} /></Arrow>
          </HBar>
          <Notes />
        </DocPane>

        <Side>
          <Panel>
            <PanelTitle>Variables</PanelTitle>
            <ListBox $rows>
              <Grid>
                <colgroup><Col $w={141} /><Col $w={192} /><Col /></colgroup>
                <thead><tr><th>Name</th><th>Value</th><th>Locked</th></tr></thead>
                <tbody>
                  {variables.map(([n, v]) => (
                    <tr key={n}><td>{n}</td><td>{v}</td><td>-</td></tr>
                  ))}
                  <tr><td /><td /><td /></tr>
                </tbody>
              </Grid>
            </ListBox>
            <Controls>
              <Row $h={49}>
                <Field $w={247} $dark disabled aria-label="Variable name" />
                <Field $w={234} disabled defaultValue="0.0" aria-label="Variable value" />
                <SquareButton disabled aria-label="Lock variable">
                  <Icon w={40} h={44}>
                    <path d="M10 13Q14 6 20 7T31 20" stroke="#a6a6a6" strokeWidth="5" />
                    <rect x="5" y="22" width="30" height="18" rx="3" fill="#d8e5b5" />
                    <path d="M20 27V36" stroke="#bfc4ac" strokeWidth="4" />
                  </Icon>
                </SquareButton>
              </Row>
              <Transport>
                <Group $gap={7} $after={12}>
                  <TransportButton i={0} /><TransportButton i={1} /><TransportButton i={2} />
                </Group>
                <Group $gap={12} $after={41}>
                  <TransportButton i={3} /><TransportButton i={4} />
                </Group>
                <Group $gap={26} $after={0}>
                  <Icon w={54} h={20}>
                    <path d="M0 8H39V1H48V4H51V7H54V13H51V16H48V19H39V14H0Z" fill={BLUE} />
                  </Icon>
                  <Spin $w={41} $h={84}>
                    <SpinButton aria-label="Faster"><Caret up /></SpinButton>
                    <SpinButton aria-label="Slower"><Caret /></SpinButton>
                  </Spin>
                </Group>
              </Transport>
              <Slider type="range" min="0" max="100" defaultValue="0" disabled aria-label="Animation position" />
              <Row $h={60}>
                <Field $w={195} $h={60} $lift disabled defaultValue="0.0" aria-label="Range start" />
                <Group $gap={0} $after={0}>
                  <Timer>
                    <Icon w={60} h={60}>
                      <circle cx="30" cy="34" r="20" stroke={INK} strokeWidth="5" />
                      <path d="M23 2H37V9H33V13H27V9H23ZM44 15L47 12L51 16L48 19Z" fill={INK} />
                      <path d="M30 19V34" stroke={INK} strokeWidth="4" />
                      <circle cx="30" cy="34" r="4" fill={INK} />
                    </Icon>
                  </Timer>
                  <NumberBox>
                    <Field $h={47} disabled defaultValue="1" aria-label="Duration" />
                    <Spin $w={41} $h={45}>
                      <SpinButton aria-label="Increase"><Caret up /></SpinButton>
                      <SpinButton aria-label="Decrease"><Caret /></SpinButton>
                    </Spin>
                  </NumberBox>
                </Group>
                <Field $w={195} $h={60} $lift disabled defaultValue="0.0" aria-label="Range end" />
              </Row>
            </Controls>
          </Panel>
          <Panel $grow>
            <PanelTitle>Functions</PanelTitle>
            <ListBox>
              <Grid>
                <colgroup><Col $w={141} /><Col /></colgroup>
                <thead><tr><th>Name</th><th>Value</th></tr></thead>
                <tbody><tr><td /><td /></tr></tbody>
              </Grid>
            </ListBox>
            <Entry><Field $dark aria-label="Function entry" /></Entry>
          </Panel>
        </Side>
      </Body>

      <StatusBar>
        <StatusCell $w={273}>Ready</StatusCell>
        <StatusCell $w={274}>Selecting</StatusCell>
        <StatusCell $w={385}>(12.8558,8.50877)</StatusCell>
        <StatusCell $w={621}>
          <SelectWrap>
            <UnitSelect aria-label="Angle unit" defaultValue="Degrees">
              <option>Degrees</option>
              <option>Radians</option>
            </UnitSelect>
            <Icon w={20} h={12}><path d="M2 2L10 10L18 2" stroke="#444" strokeWidth="1" /></Icon>
          </SelectWrap>
          <Callout $before={230}>Status Bar</Callout>
        </StatusCell>
        <StatusCell />
        <Icon w={24} h={46}>
          <path d="M16 22h5v5h-5ZM9 29h5v5h-5ZM16 29h5v5h-5ZM2 36h5v5h-5ZM9 36h5v5h-5ZM16 36h5v5h-5Z" fill="#bfbfbf" />
        </Icon>
      </StatusBar>
      <Pointer width="18" height="28" viewBox="0 0 18 28" aria-hidden="true">
        <path d="M2 1V23L7 18L11 26L14 25L10 17H17Z" fill="#fff" stroke="#000" />
      </Pointer>
    </Window>
  );
}
